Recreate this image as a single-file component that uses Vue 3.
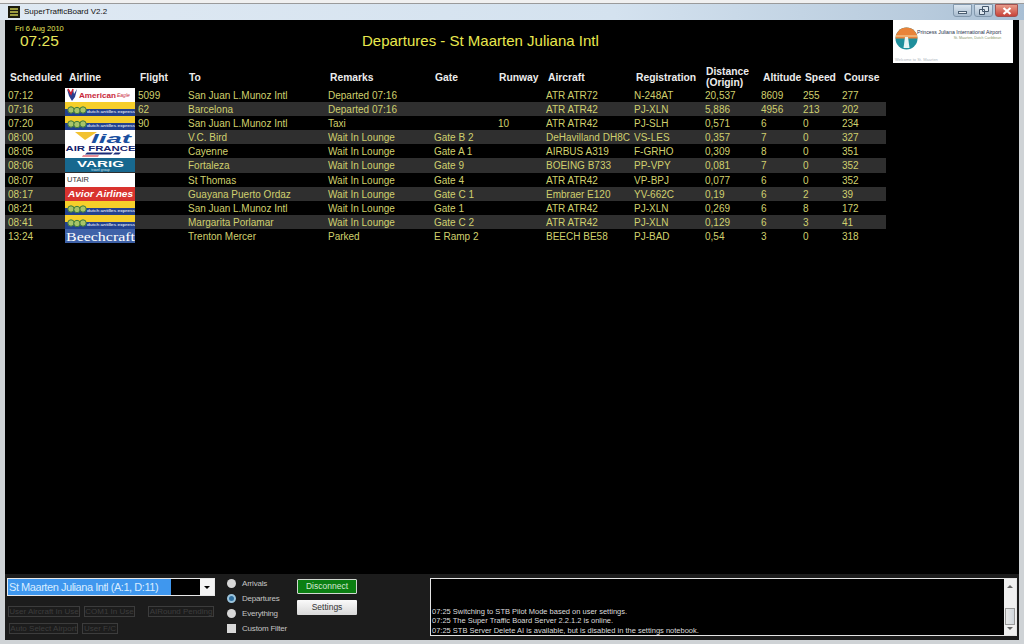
<template>
  <div class="window">
    <div class="titlebar">
      <svg class="app-icon" width="12" height="12" viewBox="0 0 12 12">
        <rect width="12" height="12" fill="#1c1c10" />
        <path d="M2 3h8M2 6h8M2 9h8" stroke="#c8c850" stroke-width="1.4" />
      </svg>
      <span class="app-name">SuperTrafficBoard V2.2</span>
      <div class="win-controls">
        <div class="win-btn min"><span class="min-bar"></span></div>
        <div class="win-btn restore">
          <svg width="10" height="9" viewBox="0 0 10 9">
            <path d="M3.5 .5h6v5h-6zM.5 3.5h5v5h-5z" fill="#dfe8f0" stroke="#44566a" />
          </svg>
        </div>
        <div class="win-btn close">
          <svg width="10" height="8" viewBox="0 0 10 8">
            <path d="M1.5 1l7 6M8.5 1l-7 6" stroke="#fff" stroke-width="2.2" />
          </svg>
        </div>
      </div>
    </div>

    <div class="board">
      <div class="top">
        <div class="clock">
          <div class="date">Fri 6 Aug 2010</div>
          <div class="time">07:25</div>
        </div>
        <div class="heading">Departures - St Maarten Juliana Intl</div>
        <div class="airport-logo">
          <svg class="airport-mark" width="23" height="23" viewBox="0 0 23 23">
            <circle cx="11.5" cy="11.5" r="11" fill="#1f8f9c" />
            <path d="M.5 11.5a11 11 0 0 1 22 0z" fill="#e8833a" />
            <path d="M0 9h23" stroke="#f5d9a8" stroke-width="1" />
            <path d="M10 10h3l1.5 11h-6z" fill="#e8f4f4" />
          </svg>
          <div class="airport-text">
            <div class="airport-name">Princess Juliana International Airport</div>
            <div class="airport-sub">St. Maarten, Dutch Caribbean</div>
          </div>
          <div class="airport-foot">Welcome to St. Maarten</div>
        </div>
      </div>

      <div class="row head">
        <div>Scheduled</div>
        <div class="head-airline">Airline</div>
        <div>Flight</div>
        <div class="head-tight">To</div>
        <div>Remarks</div>
        <div class="head-tight">Gate</div>
        <div class="head-tight">Runway</div>
        <div>Aircraft</div>
        <div>Registration</div>
        <div class="two-line head-tight">Distance<br />(Origin)</div>
        <div>Altitude</div>
        <div>Speed</div>
        <div>Course</div>
      </div>

      <div v-for="(f, i) in flights" :key="i" class="row flight" :class="{ alt: i % 2 === 1 }">
        <div>{{ f.time }}</div>
        <div class="logo-cell">
          <svg class="logo" width="71" height="14" viewBox="0 0 71 14">
            <g v-if="f.logo === 'american'">
              <rect width="71" height="14" fill="#fff" />
              <path d="M2 1l4 5 2-5 1 5 3-5-2 8-3 4-3-5z" fill="#2a3f8f" />
              <path d="M3 1l3 5 2-5" fill="none" stroke="#d02030" stroke-width="1.5" />
              <text x="14" y="9.5" textLength="37" lengthAdjust="spacingAndGlyphs" class="lg-american">American</text>
              <text x="52" y="9" class="lg-eagle">Eagle</text>
            </g>
            <g v-else-if="f.logo === 'dae'">
              <rect width="71" height="14" fill="#f6cf2a" />
              <rect y="7" width="71" height="7" fill="#23428f" />
              <circle cx="6" cy="8" r="3.2" fill="#a8c468" stroke="#3f7a3a" />
              <circle cx="12" cy="8.5" r="3.2" fill="#a8c468" stroke="#3f7a3a" />
              <circle cx="18" cy="8" r="3.2" fill="#a8c468" stroke="#3f7a3a" />
              <text x="22" y="10.8" textLength="48" lengthAdjust="spacingAndGlyphs" class="lg-dae">dutch antilles express</text>
            </g>
            <g v-else-if="f.logo === 'liat'">
              <rect width="71" height="14" fill="#fff" />
              <path d="M10 2h22l-12 8z" fill="#f2c230" />
              <text x="26" y="12.5" textLength="40" lengthAdjust="spacingAndGlyphs" class="lg-liat">liat</text>
            </g>
            <g v-else-if="f.logo === 'airfrance'">
              <rect width="71" height="14" fill="#fff" />
              <text x="0.5" y="6.5" textLength="70" lengthAdjust="spacingAndGlyphs" class="lg-af">AIR FRANCE</text>
              <path d="M22 8.5h26l-2 2H20zM50 8.5h6l-2 2h-6z" fill="#1a2c78" />
              <path d="M18 11.5h16l-1 1H17z" fill="#d02030" />
            </g>
            <g v-else-if="f.logo === 'varig'">
              <rect width="71" height="14" fill="#17688f" />
              <text x="12" y="8.5" textLength="47" lengthAdjust="spacingAndGlyphs" class="lg-varig">VARIG</text>
              <text x="35.5" y="12.8" class="lg-varig-sub">travel group</text>
            </g>
            <g v-else-if="f.logo === 'utair'">
              <rect width="71" height="14" fill="#fff" />
              <text x="2" y="8.5" class="lg-utair">UTAIR</text>
            </g>
            <g v-else-if="f.logo === 'avior'">
              <rect width="71" height="14" fill="#d9332f" />
              <text x="3" y="9.5" textLength="65" lengthAdjust="spacingAndGlyphs" class="lg-avior">Avior Airlines</text>
            </g>
            <g v-else>
              <rect width="71" height="14" fill="#3f62a8" />
              <text x="1" y="11.5" textLength="69" lengthAdjust="spacingAndGlyphs" class="lg-beech">Beechcraft</text>
            </g>
          </svg>
        </div>
        <div>{{ f.flight }}</div>
        <div>{{ f.to }}</div>
        <div>{{ f.remarks }}</div>
        <div>{{ f.gate }}</div>
        <div>{{ f.runway }}</div>
        <div>{{ f.aircraft }}</div>
        <div>{{ f.reg }}</div>
        <div>{{ f.dist }}</div>
        <div>{{ f.alt }}</div>
        <div>{{ f.speed }}</div>
        <div>{{ f.course }}</div>
      </div>

      <div class="spacer"></div>

      <div class="panel">
        <div class="controls">
          <div class="select">
            <span class="select-value">St Maarten Juliana Intl (A:1, D:11)</span>
            <span class="select-rest"></span>
            <span class="select-arrow"></span>
          </div>
          <div class="status-row first">
            <span class="status w72">User Aircraft In Use</span>
            <span class="status w51">COM1 In Use</span>
            <span class="status w66 gap">AIRound Pending</span>
          </div>
          <div class="status-row">
            <span class="status w69">Auto Select Airport</span>
            <span class="status w36">User F/C</span>
          </div>
        </div>

        <div class="filters">
          <label class="opt"><span class="radio"></span>Arrivals</label>
          <label class="opt"><span class="radio on"></span>Departures</label>
          <label class="opt"><span class="radio"></span>Everything</label>
          <label class="opt"><span class="check"></span>Custom Filter</label>
        </div>

        <div class="buttons">
          <div class="btn green">Disconnect</div>
          <div class="btn">Settings</div>
        </div>

        <div class="log">
          <div class="log-text">
            <div>07:25 Switching to STB Pilot Mode based on user settings.</div>
            <div>07:25 The Super Traffic Board Server 2.2.1.2 is online.</div>
            <div>07:25 STB Server Delete AI is available, but is disabled in the settings notebook.</div>
          </div>
          <div class="scrollbar">
            <span class="arrow up"></span>
            <span class="thumb"></span>
            <span class="arrow down"></span>
          </div>
        </div>
      </div>
    </div>
  </div>
</template>

<script setup>
const flights = [
  { time: '07:12', logo: 'american', flight: '5099', to: 'San Juan L.Munoz Intl', remarks: 'Departed 07:16', gate: '', runway: '', aircraft: 'ATR ATR72', reg: 'N-248AT', dist: '20,537', alt: '8609', speed: '255', course: '277' },
  { time: '07:16', logo: 'dae', flight: '62', to: 'Barcelona', remarks: 'Departed 07:16', gate: '', runway: '', aircraft: 'ATR ATR42', reg: 'PJ-XLN', dist: '5,886', alt: '4956', speed: '213', course: '202' },
  { time: '07:20', logo: 'dae', flight: '90', to: 'San Juan L.Munoz Intl', remarks: 'Taxi', gate: '', runway: '10', aircraft: 'ATR ATR42', reg: 'PJ-SLH', dist: '0,571', alt: '6', speed: '0', course: '234' },
  { time: '08:00', logo: 'liat', flight: '', to: 'V.C. Bird', remarks: 'Wait In Lounge', gate: 'Gate B 2', runway: '', aircraft: 'DeHavilland DH8C', reg: 'VS-LES', dist: '0,357', alt: '7', speed: '0', course: '327' },
  { time: '08:05', logo: 'airfrance', flight: '', to: 'Cayenne', remarks: 'Wait In Lounge', gate: 'Gate A 1', runway: '', aircraft: 'AIRBUS A319', reg: 'F-GRHO', dist: '0,309', alt: '8', speed: '0', course: '351' },
  { time: '08:06', logo: 'varig', flight: '', to: 'Fortaleza', remarks: 'Wait In Lounge', gate: 'Gate 9', runway: '', aircraft: 'BOEING B733', reg: 'PP-VPY', dist: '0,081', alt: '7', speed: '0', course: '352' },
  { time: '08:07', logo: 'utair', flight: '', to: 'St Thomas', remarks: 'Wait In Lounge', gate: 'Gate 4', runway: '', aircraft: 'ATR ATR42', reg: 'VP-BPJ', dist: '0,077', alt: '6', speed: '0', course: '352' },
  { time: '08:17', logo: 'avior', flight: '', to: 'Guayana Puerto Ordaz', remarks: 'Wait In Lounge', gate: 'Gate C 1', runway: '', aircraft: 'Embraer E120', reg: 'YV-662C', dist: '0,19', alt: '6', speed: '2', course: '39' },
  { time: '08:21', logo: 'dae', flight: '', to: 'San Juan L.Munoz Intl', remarks: 'Wait In Lounge', gate: 'Gate 1', runway: '', aircraft: 'ATR ATR42', reg: 'PJ-XLN', dist: '0,269', alt: '6', speed: '8', course: '172' },
  { time: '08:41', logo: 'dae', flight: '', to: 'Margarita Porlamar', remarks: 'Wait In Lounge', gate: 'Gate C 2', runway: '', aircraft: 'ATR ATR42', reg: 'PJ-XLN', dist: '0,129', alt: '6', speed: '3', course: '41' },
  { time: '13:24', logo: 'beech', flight: '', to: 'Trenton Mercer', remarks: 'Parked', gate: 'E Ramp 2', runway: '', aircraft: 'BEECH BE58', reg: 'PJ-BAD', dist: '0,54', alt: '3', speed: '0', course: '318' }
]
</script>

<style>
html, body {
  margin: 0;
  overflow: hidden;
}
</style>

<style scoped>
.window {
  width: 1024px;
  height: 644px;
  box-sizing: border-box;
  padding: 0 5px 4px;
  background: #cfd3d6;
  display: flex;
  flex-direction: column;
  font-family: "Liberation Sans", Arial, sans-serif;
  overflow: hidden;
}
.titlebar {
  height: 20px;
  flex: none;
  margin: 0 -5px;
  padding: 0 5px 0 8px;
  box-sizing: border-box;
  display: flex;
  align-items: center;
  gap: 4px;
  background: linear-gradient(90deg, #dfe9f3 0%, #d4e2ef 60%, #b8cbdd 90%, #a9bfd4 100%);
  border-top: 3px solid #f0f0f0;
  box-shadow: inset 0 1px #9a9a9a;
}
.app-icon {
  flex: none;
}
.app-name {
  font-size: 8px;
  color: #111;
}
.win-controls {
  margin-left: auto;
  display: flex;
  gap: 2px;
  align-self: flex-start;
  margin-top: 1px;
  margin-right: 1px;
}
.win-btn {
  height: 13px;
  width: 19px;
  box-sizing: border-box;
  border: 1px solid #8298ad;
  border-radius: 0 0 3px 3px;
  background: linear-gradient(#dbe6f0, #a9bccf);
  display: flex;
  align-items: center;
  justify-content: center;
}
.close {
  width: 23px;
  border-color: #a05050;
  background: linear-gradient(#e89a88, #c8443a);
}
.min-bar {
  width: 9px;
  height: 3px;
  margin-top: 3px;
  background: #eef2f6;
  border: 1px solid #4a5e72;
  box-sizing: border-box;
}
.board {
  flex: 1;
  min-height: 0;
  background: #000;
  display: flex;
  flex-direction: column;
}
.top {
  height: 46px;
  flex: none;
  display: flex;
}
.clock {
  width: 70px;
  margin-left: 10px;
  padding-top: 4px;
  color: #e6e65a;
}
.date {
  font-size: 7.5px;
  line-height: 9px;
  white-space: nowrap;
}
.time {
  font-size: 15.5px;
  line-height: 16px;
  margin-left: 5px;
}
.heading {
  margin-left: 277px;
  padding-top: 11px;
  font-size: 15px;
  line-height: 20px;
  color: #e8e84e;
  white-space: nowrap;
}
.airport-logo {
  position: absolute;
  left: 893px;
  top: 20px;
  width: 120px;
  height: 43px;
  background: #fff;
  color: #223;
}
.airport-mark {
  position: absolute;
  left: 2px;
  top: 7px;
}
.airport-text {
  position: absolute;
  left: 24px;
  top: 9px;
}
.airport-name {
  font-size: 5.2px;
  line-height: 7px;
  color: #26304a;
  white-space: nowrap;
}
.airport-sub {
  font-size: 3.6px;
  line-height: 5px;
  color: #8a9a70;
  text-align: right;
  white-space: nowrap;
}
.airport-foot {
  position: absolute;
  left: 2px;
  top: 37px;
  font-size: 4px;
  color: #b0b8c0;
  white-space: nowrap;
}
.row {
  width: 881px;
  display: grid;
  grid-template-columns: 57px 73px 50px 140px 106px 64px 48px 88px 71px 56px 42px 39px 47px;
  flex: none;
}
.row > div {
  padding-left: 3px;
  min-width: 0;
}
.head {
  height: 22px;
  padding-bottom: 2px;
  box-sizing: border-box;
  align-items: center;
  font-size: 10.3px;
  font-weight: bold;
  color: #ececec;
  line-height: 11px;
}
.head > div {
  padding-left: 5px;
  white-space: nowrap;
}
.head > .head-airline {
  padding-left: 7px;
}
.head > .head-tight {
  padding-left: 4px;
}
.flight {
  height: 14.1px;
  font-size: 10px;
  line-height: 15px;
  color: #d0d06e;
  white-space: nowrap;
}
.alt {
  background: #2f2f2f;
}
.flight > .logo-cell {
  overflow: hidden;
  height: 14.1px;
}
.logo {
  display: block;
}
.lg-american {
  font-size: 7px;
  font-weight: bold;
  fill: #c8283a;
}
.lg-eagle {
  font-size: 5px;
  font-style: italic;
  fill: #c8283a;
}
.lg-dae {
  font-size: 4.2px;
  fill: #fff;
}
.lg-liat {
  font-size: 12.5px;
  font-weight: bold;
  font-style: italic;
  fill: #1a4fa0;
}
.lg-af {
  font-size: 6.5px;
  font-weight: bold;
  fill: #14246e;
}
.lg-varig {
  font-size: 9.5px;
  font-weight: bold;
  fill: #fff;
}
.lg-varig-sub {
  font-size: 3.5px;
  fill: #cfe4ee;
  text-anchor: middle;
}
.lg-utair {
  font-size: 7.5px;
  fill: #333;
}
.lg-avior {
  font-size: 9.5px;
  font-weight: bold;
  font-style: italic;
  fill: #fff;
}
.lg-beech {
  font-family: "Liberation Serif", serif;
  font-size: 13px;
  fill: #fff;
}
.spacer {
  flex: 1;
}
.panel {
  height: 66px;
  flex: none;
  background: #1c1c1c;
  display: flex;
  padding-top: 4px;
  box-sizing: border-box;
}
.controls {
  width: 210px;
  margin-left: 2px;
  flex: none;
}
.select {
  height: 18px;
  box-sizing: border-box;
  border: 1px solid #e8e8e8;
  background: #000;
  display: flex;
  width: 208px;
}
.select-value {
  background: #3f97ee;
  color: #d8ecff;
  font-size: 11px;
  line-height: 16px;
  padding-left: 1px;
  letter-spacing: -0.45px;
  white-space: nowrap;
  width: 163px;
  box-sizing: border-box;
  flex: none;
  overflow: hidden;
}
.select-rest {
  flex: 1;
}
.select-arrow {
  width: 14px;
  flex: none;
  background: #f4f4f4;
  position: relative;
}
.select-arrow::after {
  content: "";
  position: absolute;
  left: 4px;
  top: 7px;
  border-left: 3px solid transparent;
  border-right: 3px solid transparent;
  border-top: 3px solid #000;
}
.status-row {
  display: flex;
  gap: 4px;
  margin-top: 6px;
  margin-left: 2px;
}
.status-row.first {
  margin-top: 9px;
  margin-left: 1px;
  padding-top: 1px;
}
.status {
  height: 11px;
  box-sizing: border-box;
  border: 1px solid #3c3c3c;
  font-size: 8px;
  line-height: 9px;
  color: #3d3d3d;
  text-align: center;
  white-space: nowrap;
  overflow: hidden;
}
.w72 { width: 72px; }
.w51 { width: 51px; }
.w66 { width: 66px; }
.w69 { width: 69px; }
.w36 { width: 36px; }
.gap { margin-left: 9px; }
.filters {
  margin-left: 10px;
  width: 60px;
  flex: none;
  display: flex;
  flex-direction: column;
  gap: 5px;
}
.opt {
  display: flex;
  align-items: center;
  gap: 6px;
  height: 10px;
  font-size: 8px;
  color: #c4c4c4;
  white-space: nowrap;
  letter-spacing: -0.2px;
}
.radio {
  width: 9px;
  height: 9px;
  border-radius: 50%;
  background: #d8d8d8;
  flex: none;
  box-sizing: border-box;
}
.radio.on {
  border: 2px solid #9cc4dc;
  background: #2f6f9f;
}
.check {
  width: 9px;
  height: 9px;
  background: #d8d8d8;
  flex: none;
}
.buttons {
  margin-left: 10px;
  width: 60px;
  flex: none;
  display: flex;
  flex-direction: column;
  gap: 6px;
  margin-top: 1px;
}
.btn {
  height: 15px;
  box-sizing: border-box;
  border-radius: 1px;
  background: linear-gradient(#fafafa, #d8d8d8);
  color: #333;
  font-size: 8.5px;
  line-height: 15px;
  text-align: center;
}
.btn.green {
  background: #0b7f12;
  border: 1px solid #d0d8d0;
  color: #d4e8d4;
  line-height: 13px;
}
.log {
  margin-left: 73px;
  width: 587px;
  height: 58px;
  flex: none;
  box-sizing: border-box;
  border: 1px solid #e4e4e4;
  background: #000;
  display: flex;
}
.log-text {
  flex: 1;
  display: flex;
  flex-direction: column;
  justify-content: flex-end;
  color: #dcdcdc;
  font-size: 7.5px;
  line-height: 9.3px;
  padding-left: 1px;
  white-space: nowrap;
}
.scrollbar {
  width: 12px;
  flex: none;
  background: #f0f0f0;
  display: flex;
  flex-direction: column;
  align-items: center;
  position: relative;
}
.arrow {
  position: absolute;
  left: 3px;
  border-left: 3px solid transparent;
  border-right: 3px solid transparent;
}
.arrow.up {
  top: 6px;
  border-bottom: 3px solid #666;
}
.arrow.down {
  bottom: 5px;
  border-top: 3px solid #666;
}
.thumb {
  position: absolute;
  left: 1px;
  right: 1px;
  top: 29px;
  height: 17px;
  background: linear-gradient(90deg, #e8e8e8, #cfd6dc);
  border: 1px solid #9a9a9a;
  box-sizing: border-box;
}
</style>
